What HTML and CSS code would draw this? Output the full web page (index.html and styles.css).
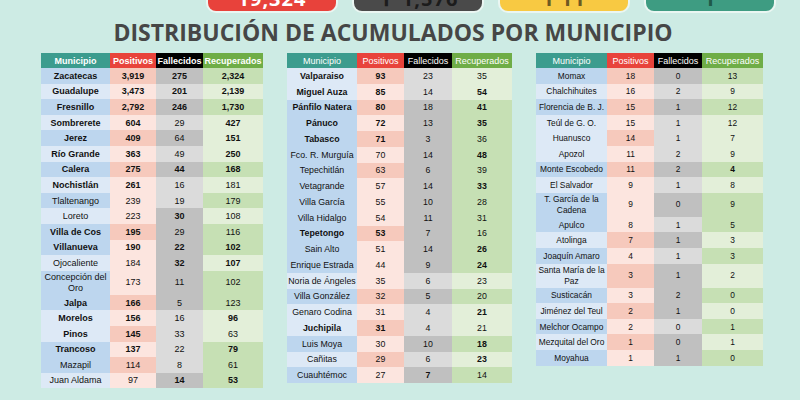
FILE: index.html
```html
<!DOCTYPE html>
<html lang="es">
<head>
<meta charset="utf-8">
<title>Distribución de acumulados por municipio</title>
<link rel="stylesheet" href="styles.css">
</head>
<body>
<div class="pills">
  <div class="pill red"><span>19,324</span></div>
  <div class="pill gray"><span>✝ 1,576</span></div>
  <div class="pill yellow"><span>1 11</span></div>
  <div class="pill green"><span>1</span></div>
</div>
<h1 class="title">DISTRIBUCIÓN DE ACUMULADOS POR MUNICIPIO</h1>
<div class="tables">
  <table class="t1">
    <colgroup><col class="c1"><col class="c2"><col class="c3"><col class="c4"></colgroup>
    <thead><tr><th>Municipio</th><th>Positivos</th><th>Fallecidos</th><th>Recuperados</th></tr></thead>
    <tbody>
      <tr><td class="k b">Zacatecas</td><td class="k b">3,919</td><td class="k b">275</td><td class="k b">2,324</td></tr>
      <tr><td class="b">Guadalupe</td><td class="b">3,473</td><td class="b">201</td><td class="b">2,139</td></tr>
      <tr><td class="k b">Fresnillo</td><td class="k b">2,792</td><td class="k b">246</td><td class="k b">1,730</td></tr>
      <tr><td class="b">Sombrerete</td><td class="b">604</td><td>29</td><td class="b">427</td></tr>
      <tr><td class="k b">Jerez</td><td class="k b">409</td><td class="k">64</td><td class="b">151</td></tr>
      <tr><td class="b">Río Grande</td><td class="b">363</td><td>49</td><td class="b">250</td></tr>
      <tr><td class="k b">Calera</td><td class="k b">275</td><td class="k b">44</td><td class="k b">168</td></tr>
      <tr><td class="b">Nochistlán</td><td class="b">261</td><td>16</td><td>181</td></tr>
      <tr><td class="k">Tlaltenango</td><td>239</td><td>19</td><td class="k">179</td></tr>
      <tr><td>Loreto</td><td>223</td><td class="k b">30</td><td>108</td></tr>
      <tr><td class="k b">Villa de Cos</td><td class="k b">195</td><td class="k">29</td><td class="k">116</td></tr>
      <tr><td class="k b">Villanueva</td><td class="b">190</td><td class="k b">22</td><td class="k b">102</td></tr>
      <tr><td>Ojocaliente</td><td>184</td><td class="k b">32</td><td class="b">107</td></tr>
      <tr class="dbl"><td class="k">Concepción del<br>Oro</td><td>173</td><td class="k">11</td><td class="k">102</td></tr>
      <tr><td class="k b">Jalpa</td><td class="k b">166</td><td class="k">5</td><td class="k">123</td></tr>
      <tr><td class="b">Morelos</td><td class="b">156</td><td>16</td><td class="b">96</td></tr>
      <tr><td class="b">Pinos</td><td class="k b">145</td><td>33</td><td>63</td></tr>
      <tr><td class="k b">Trancoso</td><td class="b">137</td><td>22</td><td class="k b">79</td></tr>
      <tr><td class="k">Mazapil</td><td class="k">114</td><td>8</td><td class="k">61</td></tr>
      <tr><td>Juan Aldama</td><td>97</td><td class="k b">14</td><td class="k b">53</td></tr>
    </tbody>
  </table>

  <table class="t2">
    <colgroup><col class="c1"><col class="c2"><col class="c3"><col class="c4"></colgroup>
    <thead><tr><th>Municipio</th><th>Positivos</th><th>Fallecidos</th><th>Recuperados</th></tr></thead>
    <tbody>
      <tr><td class="b">Valparaiso</td><td class="k b">93</td><td>23</td><td>35</td></tr>
      <tr><td class="b">Miguel Auza</td><td class="b">85</td><td>14</td><td class="b">54</td></tr>
      <tr><td class="k b">Pánfilo Natera</td><td class="k b">80</td><td class="k">18</td><td class="k b">41</td></tr>
      <tr><td class="k b">Pánuco</td><td class="b">72</td><td class="k">13</td><td class="k b">35</td></tr>
      <tr><td class="k b">Tabasco</td><td class="k b">71</td><td class="k">3</td><td class="k">36</td></tr>
      <tr><td class="k">Fco. R. Murguía</td><td>70</td><td class="k">14</td><td class="k b">48</td></tr>
      <tr><td class="k">Tepechitlán</td><td class="k">63</td><td class="k">6</td><td class="k">39</td></tr>
      <tr><td class="k">Vetagrande</td><td>57</td><td class="k">14</td><td class="k b">33</td></tr>
      <tr><td class="k">Villa García</td><td>55</td><td class="k">10</td><td class="k">28</td></tr>
      <tr><td class="k">Villa Hidalgo</td><td>54</td><td class="k">11</td><td class="k">31</td></tr>
      <tr><td class="k b">Tepetongo</td><td class="k b">53</td><td class="k">7</td><td class="k">16</td></tr>
      <tr><td class="k">Sain Alto</td><td>51</td><td class="k">14</td><td class="k b">26</td></tr>
      <tr><td class="k">Enrique Estrada</td><td>44</td><td class="k">9</td><td class="k b">24</td></tr>
      <tr><td>Noria de Ángeles</td><td>35</td><td>6</td><td>23</td></tr>
      <tr><td class="k">Villa González</td><td class="k">32</td><td class="k">5</td><td class="k">20</td></tr>
      <tr><td>Genaro Codina</td><td>31</td><td>4</td><td class="b">21</td></tr>
      <tr><td class="b">Juchipila</td><td class="k b">31</td><td>4</td><td>21</td></tr>
      <tr><td class="k">Luis Moya</td><td>30</td><td class="k">10</td><td class="k b">18</td></tr>
      <tr><td>Cañitas</td><td class="k">29</td><td>6</td><td class="b">23</td></tr>
      <tr><td class="k">Cuauhtémoc</td><td>27</td><td class="k b">7</td><td class="k">14</td></tr>
    </tbody>
  </table>

  <table class="t3">
    <colgroup><col class="c1"><col class="c2"><col class="c3"><col class="c4"></colgroup>
    <thead><tr><th>Municipio</th><th>Positivos</th><th>Fallecidos</th><th>Recuperados</th></tr></thead>
    <tbody>
      <tr><td class="k">Momax</td><td class="k">18</td><td class="k">0</td><td class="k">13</td></tr>
      <tr><td>Chalchihuites</td><td>16</td><td>2</td><td>9</td></tr>
      <tr><td class="k">Florencia de B. J.</td><td class="k">15</td><td class="k">1</td><td class="k">12</td></tr>
      <tr><td>Teúl de G. O.</td><td>15</td><td>1</td><td>12</td></tr>
      <tr><td>Huanusco</td><td class="k">14</td><td>1</td><td>7</td></tr>
      <tr><td>Apozol</td><td>11</td><td>2</td><td>9</td></tr>
      <tr><td class="k">Monte Escobedo</td><td class="k">11</td><td class="k">2</td><td class="k b">4</td></tr>
      <tr><td>El Salvador</td><td>9</td><td>1</td><td>8</td></tr>
      <tr class="dbl"><td class="k">T. García de la<br>Cadena</td><td>9</td><td class="k">0</td><td class="k">9</td></tr>
      <tr><td class="k">Apulco</td><td>8</td><td>1</td><td class="k">5</td></tr>
      <tr><td>Atolinga</td><td class="k">7</td><td class="k">1</td><td>3</td></tr>
      <tr><td class="k">Joaquín Amaro</td><td>4</td><td>1</td><td class="k">3</td></tr>
      <tr class="dbl"><td>Santa María de la<br>Paz</td><td class="k">3</td><td class="k">1</td><td>2</td></tr>
      <tr><td class="k">Susticacán</td><td>3</td><td class="k">2</td><td class="k">0</td></tr>
      <tr><td>Jiménez del Teul</td><td class="k">2</td><td class="k">1</td><td>0</td></tr>
      <tr><td class="k">Melchor Ocampo</td><td>2</td><td>0</td><td class="k">1</td></tr>
      <tr><td>Mezquital del Oro</td><td class="k">1</td><td class="k">0</td><td>1</td></tr>
      <tr><td class="k">Moyahua</td><td>1</td><td class="k">1</td><td class="k">0</td></tr>
    </tbody>
  </table>
</div>
</body>
</html>
```

FILE: styles.css
```css
html, body {
  margin: 0;
  padding: 0;
}
body {
  width: 800px;
  height: 400px;
  overflow: hidden;
  background: #cdebe4;
  font-family: "Liberation Sans", Arial, sans-serif;
  color: #111;
}

/* top pills (cut off at the top edge) */
.pills {
  display: flex;
  gap: 14px;
  padding-left: 206px;
  height: 13px;
}
.pill {
  width: 128px;
  height: 11px;
  border: 2px solid #eaf6f2;
  border-top: 0;
  border-radius: 0 0 10px 10px;
  overflow: hidden;
  display: flex;
  justify-content: center;
  align-items: flex-end;
}
.pill span {
  font: 700 20px/20px "Open Sans", sans-serif;
  margin-bottom: 2px;
  letter-spacing: 1px;
}
.red { background: #e8423b; color: #fff; }
.gray { background: #4a4a4a; color: #1c1c1c; }
.yellow { background: #f8c942; color: #6d5a22; }
.green { background: #3e9c82; color: #1f5a49; }

.title {
  margin: 5px 0 0;
  padding-right: 14px;
  text-align: center;
  font: 700 23px/28px "Open Sans", sans-serif;
  color: #464646;
}

.tables {
  display: flex;
  align-items: flex-start;
  gap: 24px;
  padding-left: 41px;
  margin-top: 7px;
}

table {
  border-collapse: collapse;
  border-spacing: 0;
  table-layout: fixed;
}
th, td {
  padding: 0;
  text-align: center;
  vertical-align: middle;
  white-space: nowrap;
  overflow: hidden;
}
th {
  height: 15px;
  color: #fff;
  font-size: 9px;
  font-weight: 400;
}
.t1 th { font-weight: 700; }
td { font-size: 9px; }
tbody tr { height: 15.6px; }
tbody tr.dbl { height: 24px; }
tr.dbl td { line-height: 11px; }
.t2 tbody tr { height: 15.75px; }
.t2 td { font-size: 8.8px; }
.t3 td { font-size: 8.4px; }

.t1 { width: 222px; }
.t1 .c1 { width: 69px; }
.t1 .c2 { width: 46px; }
.t1 .c3 { width: 47px; }
.t1 .c4 { width: 60px; }
.t2 { width: 225px; }
.t2 .c1 { width: 70px; }
.t2 .c2 { width: 47px; }
.t2 .c3 { width: 48px; }
.t2 .c4 { width: 60px; }
.t3 { width: 227px; }
.t3 .c1 { width: 71px; }
.t3 .c2 { width: 47px; }
.t3 .c3 { width: 48px; }
.t3 .c4 { width: 61px; }

th:nth-child(1) { background: #3c9c8e; }
th:nth-child(2) { background: #e8433b; }
th:nth-child(3) { background: #000; }
th:nth-child(4) { background: #6fad47; }

td:nth-child(1) { background: #dde9f6; }
td:nth-child(1).k { background: #bdd6ee; }
td:nth-child(2) { background: #fce5df; }
td:nth-child(2).k { background: #f6c9bc; }
td:nth-child(3) { background: #dbdbdb; }
td:nth-child(3).k { background: #c0c0c0; }
td:nth-child(4) { background: #e3efd9; }
td:nth-child(4).k { background: #c6e0b4; }

.b { font-weight: 700; }
```
